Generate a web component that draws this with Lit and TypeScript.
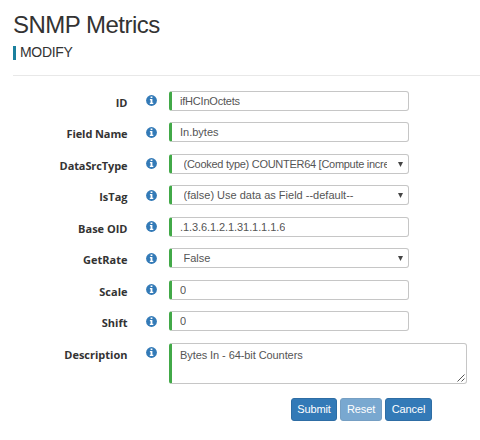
import { LitElement, html, css, svg } from "lit";
import { customElement } from "lit/decorators.js";

interface Field {
  label: string;
  value: string;
  kind: "text" | "select" | "area";
  size: string;
  fit?: string;
}

const FIELDS: Field[] = [
  { label: "ID", value: "ifHCInOctets", kind: "text", size: "short", fit: "tight" },
  { label: "Field Name", value: "In.bytes", kind: "text", size: "tall condensed" },
  { label: "DataSrcType", value: "(Cooked type) COUNTER64 [Compute increment]", kind: "select", size: "short condensed", fit: "tighter" },
  { label: "IsTag", value: "(false) Use data as Field --default--", kind: "select", size: "tall" },
  { label: "Base OID", value: ".1.3.6.1.2.1.31.1.1.1.6", kind: "text", size: "short", fit: "snug" },
  { label: "GetRate", value: "False", kind: "select", size: "tall" },
  { label: "Scale", value: "0", kind: "text", size: "short" },
  { label: "Shift", value: "0", kind: "text", size: "tall" },
  { label: "Description", value: "Bytes In - 64-bit Counters", kind: "area", size: "last", fit: "snug" },
];

@customElement("app-root")
export class AppRoot extends LitElement {
  static styles = css`
    :host {
      display: block;
      box-sizing: border-box;
      width: 480px;
      height: 440px;
      padding: 11px 0 0 13px;
      background: #fff;
      color: #333;
      font-family: "Liberation Sans", Arial, sans-serif;
    }
    h2 {
      margin: 0;
      font-size: 24px;
      font-weight: 400;
      letter-spacing: -0.52px;
      line-height: 28px;
    }
    .mode {
      height: 14px;
      margin-top: 7px;
      padding-left: 4px;
      border-left: 3px solid #1b809e;
      font-size: 14px;
      letter-spacing: -0.3px;
      line-height: 12px;
    }
    .rule {
      height: 1px;
      margin: 15px 0;
      background: #e8e8e8;
    }
    .row {
      display: grid;
      grid-template-columns: 115px 41px 1fr;
      align-items: start;
    }
    .short { height: 31px; }
    .tall { height: 32px; }
    .last { height: 55px; }
    label {
      padding: 4px 0.5px 0 0;
      text-align: right;
      font: 700 11px/16px "Open Sans", sans-serif;
      white-space: nowrap;
    }
    .condensed label { letter-spacing: -0.1px; }
    .info {
      width: 11px;
      height: 11px;
      margin: 4px 0 0 18px;
      display: block;
    }
    .tall .info { margin-top: 5px; }
    .box {
      box-sizing: border-box;
      display: flex;
      width: 240px;
      height: 20px;
      padding: 0 8px;
      border: 1px solid #c6c6c6;
      border-left: 3px solid #42a948;
      border-radius: 3px;
      color: #555;
      font-size: 11px;
      line-height: 18px;
      white-space: nowrap;
    }
    .select {
      padding: 0 5px 0 11.5px;
      justify-content: space-between;
    }
    .value { overflow: hidden; }
    .select .value { width: 203px; }
    .tight .value { letter-spacing: -0.21px; }
    .tighter .value { letter-spacing: -0.28px; }
    .snug .value { letter-spacing: -0.08px; }
    .caret {
      width: 5px;
      height: 5px;
      margin-top: 6.5px;
    }
    .area {
      position: relative;
      width: 298px;
      height: 41px;
      padding-top: 2px;
    }
    .grip {
      position: absolute;
      right: 1px;
      bottom: 1px;
      width: 8px;
      height: 8px;
    }
    .actions {
      display: flex;
      gap: 3px;
      padding-left: 278px;
    }
    button {
      box-sizing: border-box;
      height: 23px;
      padding: 0 0 1px;
      border: 1px solid #2e6da4;
      border-radius: 3px;
      background: #337ab7;
      color: #fff;
      font: 11px/20px "Liberation Sans", Arial, sans-serif;
      letter-spacing: -0.1px;
    }
    .submit { width: 46px; }
    .reset { width: 42px; opacity: 0.65; }
    .cancel { width: 47px; }
  `;

  private info() {
    return html`<svg class="info" viewBox="0 0 11 11">
      ${svg`<circle cx="5.5" cy="5.5" r="5.4" fill="#337ab7"/><path fill="#fff" d="M4.6 1.6h1.8v1.5H4.6zM3.9 4.1h2.5v3.6h.9v1.2H3.8V7.7h.8V5.3h-.7z"/>`}
    </svg>`;
  }

  private control(f: Field) {
    return html`<div class="box ${f.kind} ${f.fit ?? ""}">
      <span class="value">${f.value}</span>
      ${f.kind === "select"
        ? html`<svg class="caret" viewBox="0 0 4 4"><path d="M0 0h4L2 4z" fill="#444" /></svg>`
        : ""}
      ${f.kind === "area"
        ? html`<svg class="grip" viewBox="0 0 8 8"><path d="M.5 7.5l7-7M4.5 7.5l3-3" stroke="#555" fill="none" /></svg>`
        : ""}
    </div>`;
  }

  render() {
    return html`
      <h2>SNMP Metrics</h2>
      <div class="mode">MODIFY</div>
      <div class="rule"></div>
      ${FIELDS.map(
        (f) => html`<div class="row ${f.size}">
          <label>${f.label}</label>${this.info()}${this.control(f)}
        </div>`
      )}
      <div class="actions">
        <button class="submit">Submit</button>
        <button class="reset">Reset</button>
        <button class="cancel">Cancel</button>
      </div>
    `;
  }
}
